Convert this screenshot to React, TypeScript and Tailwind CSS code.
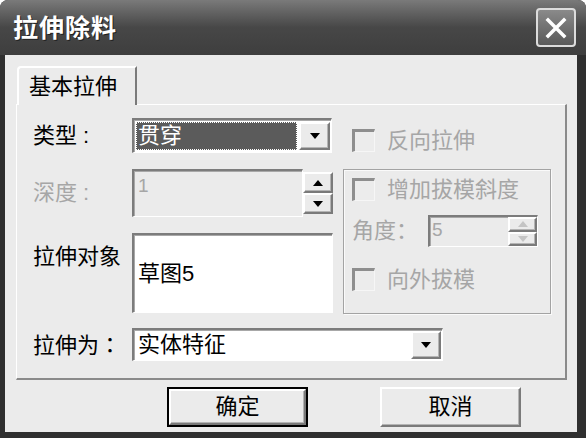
import type { ReactNode } from 'react';

const FONT = "font-['Liberation_Sans','Noto_Sans_CJK_SC',sans-serif]";

function Down({ color = '#000' }: { color?: string }) {
  return (
    <svg width="10" height="6" viewBox="0 0 10 6">
      <polygon points="0,0 10,0 5,6" fill={color} />
    </svg>
  );
}

function Up({ color = '#000' }: { color?: string }) {
  return (
    <svg width="10" height="6" viewBox="0 0 10 6">
      <polygon points="0,6 10,6 5,0" fill={color} />
    </svg>
  );
}

// classic raised 3D button face
function Raised({ className, children }: { className?: string; children?: ReactNode }) {
  return (
    <div
      className={`flex items-center justify-center bg-[#ebebeb] border-t-2 border-l-2 border-b-2 border-r-2 border-t-white border-l-white border-b-[#7a7a7a] border-r-[#7a7a7a] shadow-[inset_-1px_-1px_0_#b4b4b4] ${className ?? ''}`}
    >
      {children}
    </div>
  );
}

function CheckBox({ label }: { label: string }) {
  return (
    <div className="flex items-center gap-[12px]">
      <div className="w-[23px] h-[23px] bg-[#ececec] border-t-[3px] border-l-[3px] border-b border-r border-t-[#8e8e8e] border-l-[#8e8e8e] border-b-[#f6f6f6] border-r-[#f6f6f6]" />
      <span className="text-[22px] leading-none text-[#a6a6a6]">{label}</span>
    </div>
  );
}

const sunken =
  'border-t-2 border-l-2 border-b border-r border-t-[#7c7c7c] border-l-[#7c7c7c] border-b-white border-r-white shadow-[inset_1px_1px_0_#a8a8a8]';

export default function App() {
  return (
    <div className={`w-[586px] h-[438px] bg-[#2f2f2f] rounded-t-[8px] overflow-hidden flex flex-col ${FONT}`}>
      {/* title bar */}
      <div className="h-[55px] shrink-0 flex items-center justify-between pl-[13px] pr-[10px] bg-linear-to-b from-[#7a7a7a] via-[#474747] to-[#3e3e3e]">
        <span className="mt-[2px] text-[25px] font-bold text-white leading-none tracking-[1px] [text-shadow:1px_1px_0_#1e1e1e]">
          拉伸除料
        </span>
        <div className="w-[40px] h-[39px] rounded-[4px] border-2 border-[#dcdcdc] bg-linear-to-b from-[#8a8a8a] to-[#5a5a5a] flex items-center justify-center">
          <svg width="22" height="22" viewBox="0 0 22 22">
            <path d="M3 3 L19 19 M19 3 L3 19" stroke="#fff" strokeWidth="3.5" strokeLinecap="square" />
          </svg>
        </div>
      </div>

      {/* body */}
      <div className="flex-1 ml-[5px] mr-[9px] mb-[6px] bg-[#ebebeb] pt-[11px] pl-[11px] pr-[10px] flex flex-col">
        {/* tab header */}
        <div className="flex">
          <div className="relative z-10 -mb-[1px] ml-[1px] w-[120px] h-[39px] bg-[#ebebeb] rounded-tl-[4px] border-t-2 border-l-2 border-r-2 border-t-white border-l-white border-r-[#7a7a7a] pl-[10px] flex items-center">
            <span className="text-[22px] leading-none text-black">基本拉伸</span>
          </div>
        </div>

        {/* tab panel */}
        <div className="h-[276px] border-t border-l border-t-white border-l-white border-r-2 border-b-2 border-r-[#8a8a8a] border-b-[#8a8a8a] pt-[13px] pl-[16px]">
          <div className="flex">
            {/* left column */}
            <div className="w-[300px] flex flex-col gap-[16px]">
              <div className="h-[35px] flex items-center">
                <span className="w-[99px] text-[22px] leading-none text-black">类型 :</span>
                <div className={`w-[200px] h-[35px] bg-white ${sunken} flex items-center pl-[2px] pr-[1px] py-[2px]`}>
                  <div className="flex-1 h-full bg-[#5b5b5b] outline-1 outline-dotted outline-white -outline-offset-1 flex items-center pl-[2px]">
                    <span className="text-[22px] leading-none text-white">贯穿</span>
                  </div>
                  <Raised className="w-[31px] h-full ml-[2px]">
                    <Down />
                  </Raised>
                </div>
              </div>

              <div className="h-[48px] flex items-center">
                <span className="w-[99px] text-[22px] leading-none text-[#a6a6a6]">深度 :</span>
                <div className={`w-[171px] h-[48px] bg-[#ebebeb] ${sunken} pl-[4px] pt-[4px]`}>
                  <span className="text-[19px] leading-none text-[#a6a6a6]">1</span>
                </div>
                <div className="w-[30px] h-[48px] flex flex-col pt-[3px] pb-[3px]">
                  <Raised className="flex-1">
                    <Up />
                  </Raised>
                  <Raised className="flex-1">
                    <Down />
                  </Raised>
                </div>
              </div>

              <div className="h-[80px] flex items-start">
                <span className="w-[99px] pt-[13px] text-[22px] leading-none text-black">拉伸对象</span>
                <div className={`w-[201px] h-[80px] bg-white ${sunken} flex items-center pl-[4px]`}>
                  <span className="text-[22px] leading-none text-black">草图5</span>
                </div>
              </div>
            </div>

            {/* right column */}
            <div className="ml-[10px] w-[208px] flex flex-col">
              <div className="h-[35px] pt-[11px] pl-[9px]">
                <CheckBox label="反向拉伸" />
              </div>
              <div className="mt-[16px] h-[145px] border border-[#a3a3a3] shadow-[inset_1px_1px_0_#fafafa,1px_1px_0_#fafafa] pt-[8px] pl-[8px] flex flex-col">
                <CheckBox label="增加拔模斜度" />
                <div className="mt-[14px] h-[32px] flex items-center">
                  <span className="w-[76px] text-[22px] leading-none text-[#a6a6a6]">角度：</span>
                  <div className={`w-[110px] h-[32px] bg-[#ebebeb] ${sunken} flex`}>
                    <span className="flex-1 pl-[2px] pt-[3px] text-[19px] leading-none text-[#a6a6a6]">5</span>
                    <div className="w-[29px] flex flex-col">
                      <Raised className="flex-1">
                        <Up color="#c4c4c4" />
                      </Raised>
                      <Raised className="flex-1">
                        <Down color="#c4c4c4" />
                      </Raised>
                    </div>
                  </div>
                </div>
                <div className="mt-[21px]">
                  <CheckBox label="向外拔模" />
                </div>
              </div>
            </div>
          </div>

          {/* extrude as */}
          <div className="mt-[14px] h-[33px] flex items-center">
            <span className="w-[99px] text-[22px] leading-none text-black">
              拉伸为<span className="font-['Noto_Sans_CJK_TC',sans-serif]">：</span>
            </span>
            <div className={`w-[311px] h-[33px] bg-white ${sunken} flex items-center pl-[4px] py-[1px] pr-[1px]`}>
              <span className="flex-1 text-[22px] leading-none text-black">实体特征</span>
              <Raised className="w-[30px] h-full">
                <Down />
              </Raised>
            </div>
          </div>
        </div>

        {/* buttons */}
        <div className="mt-[7px] flex">
          <div className="ml-[151px] w-[141px] h-[40px] border-2 border-black">
            <Raised className="w-full h-full">
              <span className="text-[22px] leading-none text-black">确定</span>
            </Raised>
          </div>
          <Raised className="ml-[72px] w-[141px] h-[40px]">
            <span className="text-[22px] leading-none text-black">取消</span>
          </Raised>
        </div>
      </div>
    </div>
  );
}
